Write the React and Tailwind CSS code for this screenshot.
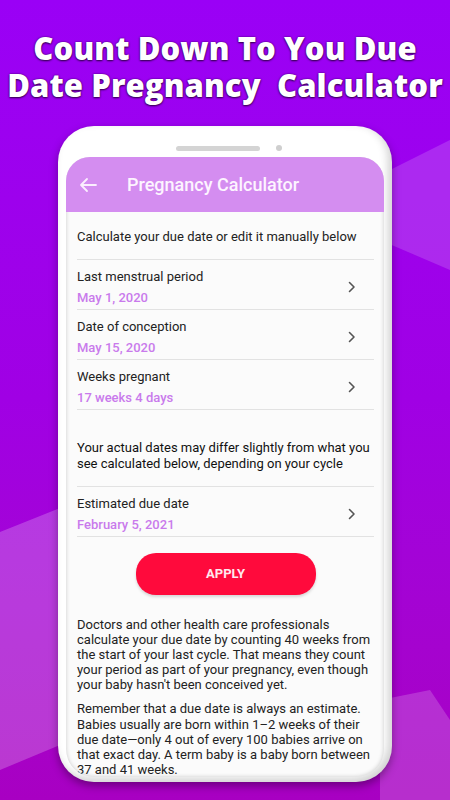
import React from "react";

const rows = [
  { label: "Last menstrual period", value: "May 1, 2020" },
  { label: "Date of conception", value: "May 15, 2020" },
  { label: "Weeks pregnant", value: "17 weeks 4 days" },
];

const Chevron = () => (
  <svg width="8" height="12" viewBox="0 0 8 12" fill="none">
    <path d="M1.5 1.5L6 6l-4.5 4.5" stroke="#555" strokeWidth="1.6" strokeLinecap="round" strokeLinejoin="round" />
  </svg>
);

const Row = ({ label, value }) => (
  <div className="flex h-[50px] items-start justify-between border-b border-[#e2e2e2] pr-[18px] pt-[9px]">
    <div className="flex flex-col gap-[5px]">
      <span className="text-[13px] leading-4 text-[#222]">{label}</span>
      <span className="text-[13px] leading-4 font-medium text-[#c97aec]">{value}</span>
    </div>
    <div className="mt-[12px]">
      <Chevron />
    </div>
  </div>
);

const App = () => {
  return (
    <div className="relative h-[800px] w-[450px] overflow-hidden bg-gradient-to-b from-[#9a00f6] via-[#a000e4] to-[#a800c2] font-['Roboto',sans-serif]">
      {/* background shapes */}
      <svg className="absolute left-0 top-0" width="450" height="800" viewBox="0 0 450 800">
        <polygon points="380,175 450,140 450,270 380,240" fill="#ffffff" fillOpacity="0.16" />
        <polygon points="0,532 60,508 110,520 110,700 60,745 0,770" fill="#ffffff" fillOpacity="0.22" />
        <polygon points="380,700 430,690 450,720 450,800 380,800" fill="#ffffff" fillOpacity="0.18" />
      </svg>

      <div className="relative flex flex-col">
        <h1 className="flex flex-col items-center gap-[1px] pt-[30px] text-center font-['Open_Sans',sans-serif] text-[31px] font-extrabold leading-[36px] tracking-[0.1px] text-white [text-shadow:0_1px_2px_rgba(40,0,60,0.9),0_0_2px_rgba(40,0,60,0.7)]">
          <span>Count Down To You Due</span>
          <span className="whitespace-pre">Date Pregnancy  Calculator</span>
        </h1>

        <div className="ml-[58px] mt-[23px] flex h-[656px] w-[334px] flex-col rounded-[36px] bg-white px-[8px] pb-[5px] pt-[13px] shadow-[inset_-4px_-4px_8px_rgba(0,0,0,0.18),0_4px_8px_rgba(0,0,0,0.35)]">
          <div className="flex h-[18px] shrink-0 items-center justify-center gap-[16px] pl-[8px]">
            <div className="h-[5px] w-[84px] rounded-full bg-[#d4d4d4]" />
            <div className="h-[6px] w-[6px] rounded-full bg-[#cfcfcf]" />
          </div>

          <div className="flex flex-1 flex-col overflow-hidden rounded-b-[28px] rounded-t-[24px] bg-[#fbfbfb] shadow-[inset_0_0_4px_rgba(0,0,0,0.2)]">
            <div className="flex h-[55px] shrink-0 items-center bg-[#d48df0] pl-[13px]">
              <svg width="18" height="16" viewBox="0 0 18 16" fill="none">
                <path d="M17 8H2M8 2L2 8l6 6" stroke="#fbeefe" strokeWidth="1.8" strokeLinecap="round" strokeLinejoin="round" />
              </svg>
              <span className="ml-[30px] text-[18px] font-medium text-[#fdf4ff]">Pregnancy Calculator</span>
            </div>

            <div className="flex flex-col pl-[11px] pr-[10px]">
              <p className="border-b border-[#e2e2e2] pb-[14px] pt-[17px] text-[13px] leading-4 text-[#222]">
                Calculate your due date or edit it manually below
              </p>
              {rows.map((r) => (
                <Row key={r.label} label={r.label} value={r.value} />
              ))}
              <p className="border-b border-[#e2e2e2] pb-[15px] pt-[30px] text-[13px] leading-[15.5px] text-[#111]">
                Your actual dates may differ slightly from what you see calculated below, depending on your cycle
              </p>
              <Row label="Estimated due date" value="February 5, 2021" />

              <button className="mx-auto mt-[16px] h-[42px] w-[180px] shrink-0 rounded-[20px] bg-[#ff0a3c] text-[13px] font-bold text-[#ffe8ee] shadow-[0_2px_3px_rgba(0,0,0,0.15)]">
                APPLY
              </button>

              <p className="mt-[22px] text-[13px] leading-[15.1px] text-[#222]">
                Doctors and other health care professionals calculate your due date by counting 40 weeks from the start of your last cycle. That means they count your period as part of your pregnancy, even though your baby hasn't been conceived yet.
              </p>
              <p className="mt-[9px] text-[13px] leading-[15.1px] text-[#222]">
                Remember that a due date is always an estimate. Babies usually are born within 1–2 weeks of their due date—only 4 out of every 100 babies arrive on that exact day. A term baby is a baby born between 37 and 41 weeks.
              </p>
            </div>
          </div>
        </div>
      </div>
    </div>
  );
};

export default App;
